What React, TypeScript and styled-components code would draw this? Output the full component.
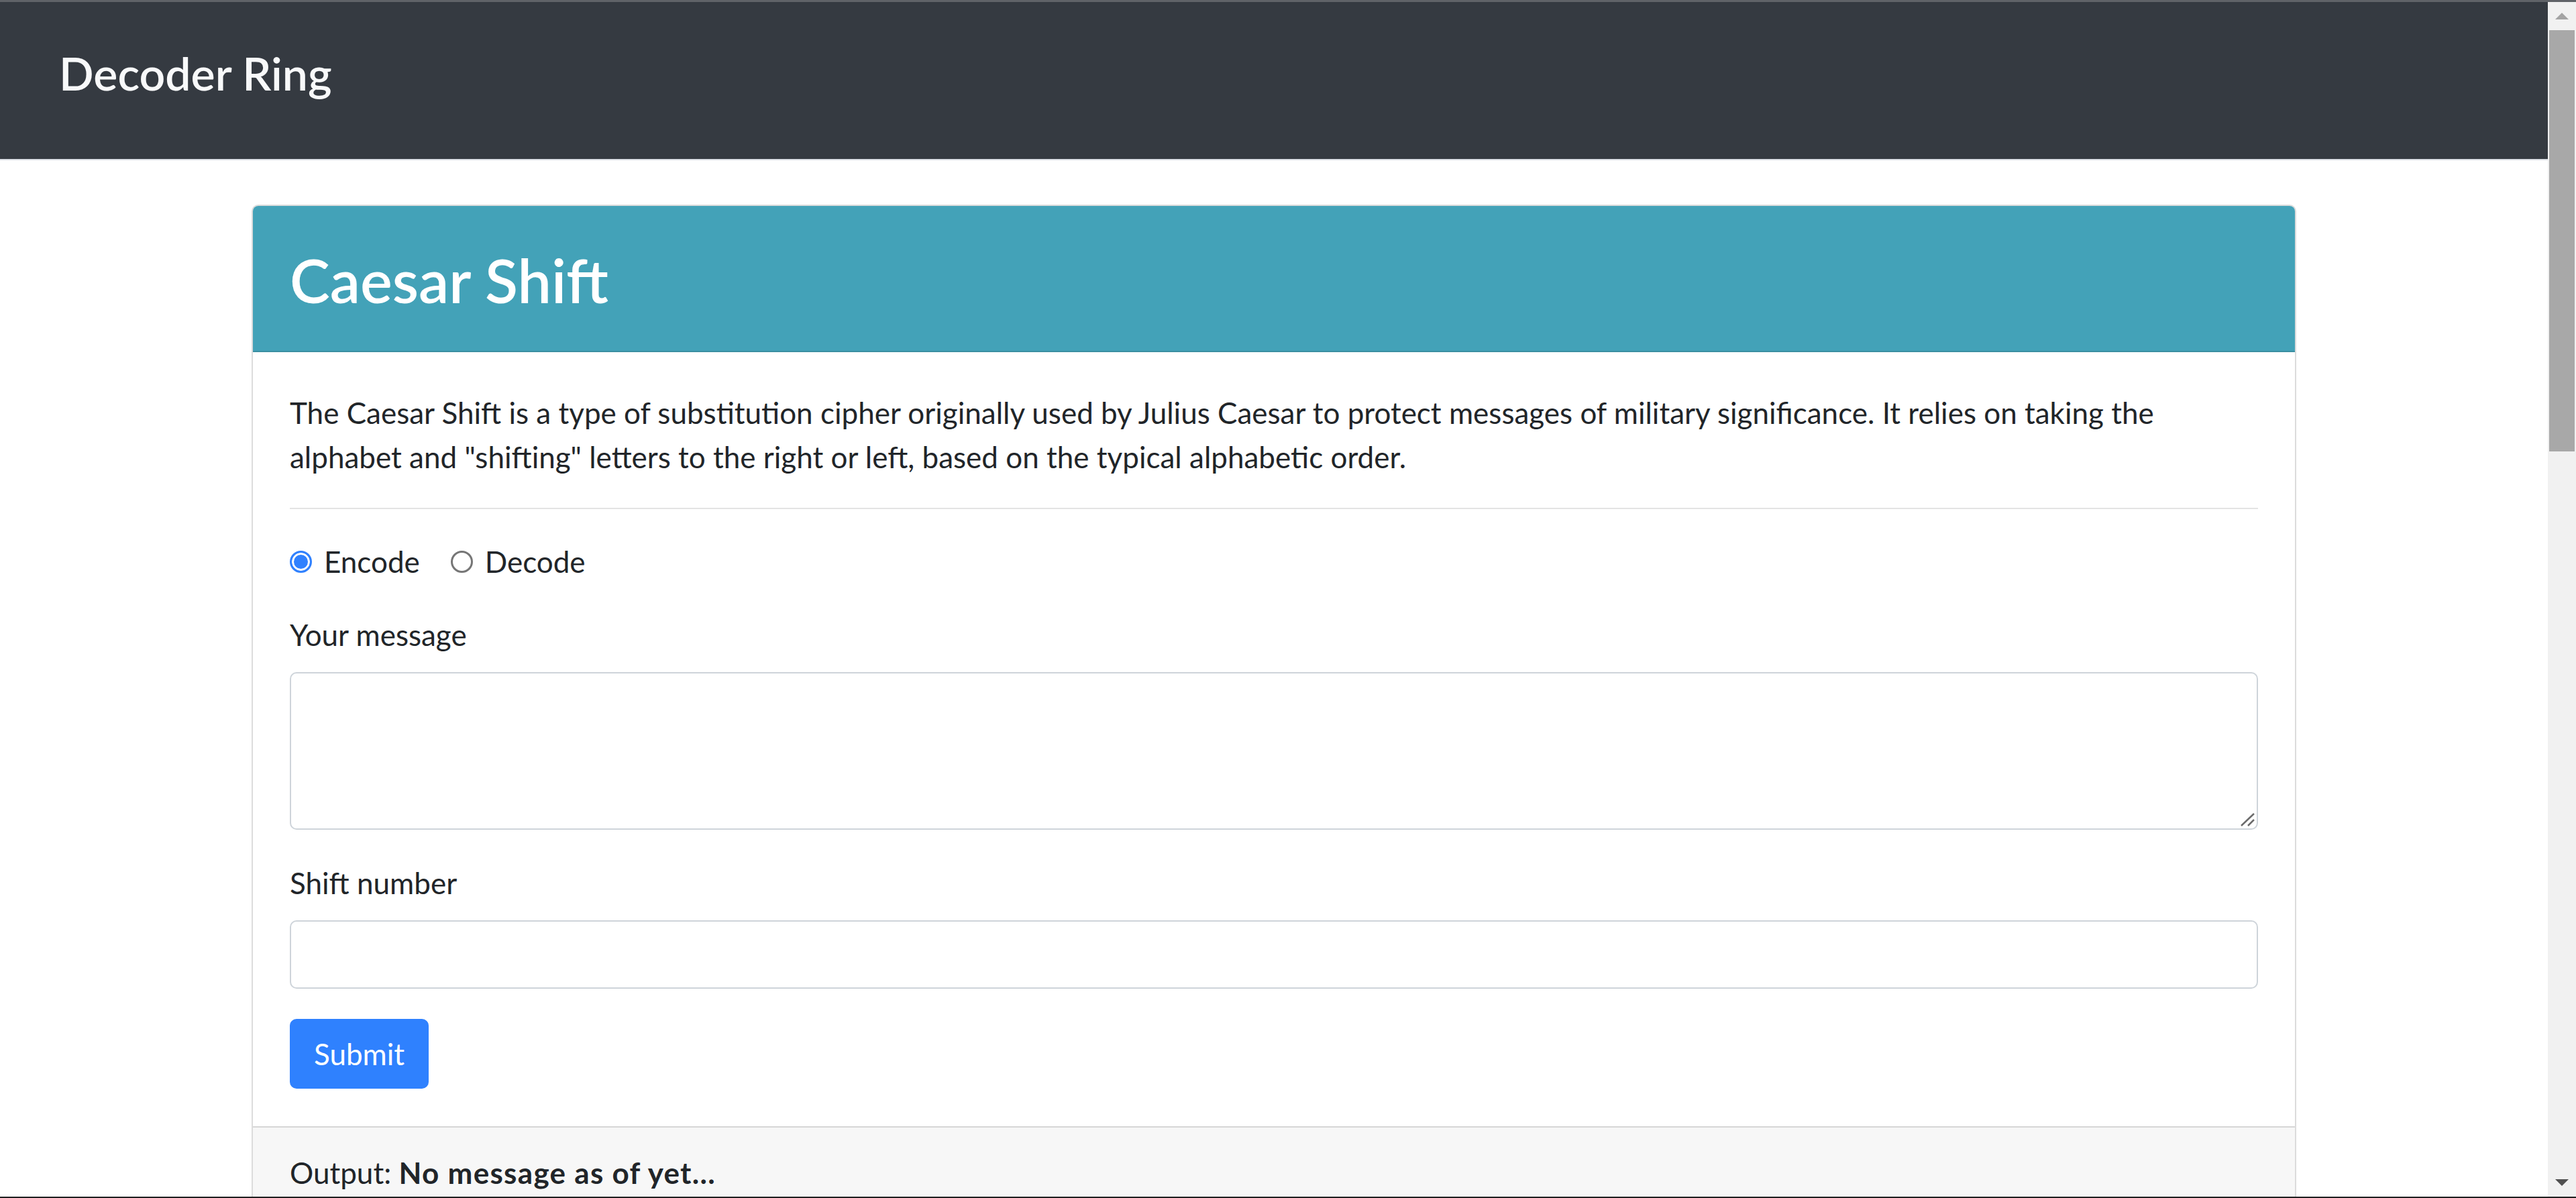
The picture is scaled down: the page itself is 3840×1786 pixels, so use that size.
import React from "react";
import styled, { createGlobalStyle } from "styled-components";

const GlobalStyle = createGlobalStyle`
  html, body {
    margin: 0;
    padding: 0;
    background: #ffffff;
    overflow: hidden;
  }
  body {
    font-family: Lato, "Open Sans", "Liberation Sans", sans-serif;
    color: #212529;
  }
  *, *::before, *::after {
    box-sizing: border-box;
  }
`;

const Viewport = styled.div`
  width: 3840px;
  height: 1786px;
  display: flex;
  flex-direction: column;
  overflow: hidden;
  background: #ffffff;
`;

const WindowEdge = styled.div<{ $h: number; $c: string }>`
  flex: none;
  height: ${(p) => p.$h}px;
  background: ${(p) => p.$c};
`;

const Frame = styled.div`
  flex: 1;
  min-height: 0;
  display: flex;
`;

const Main = styled.main`
  flex: 1;
  min-width: 0;
  overflow: hidden;
  display: flex;
  flex-direction: column;
`;

const Navbar = styled.nav`
  flex: none;
  height: 236px;
  background: #353a41;
  border-bottom: 2px solid #dde0e6;
  padding: 65px 88px 0;
`;

const Brand = styled.a`
  display: inline-block;
  font-size: 68px;
  line-height: 1.2;
  font-weight: 600;
  color: #f8f9fa;
  text-decoration: none;
`;

const Container = styled.div`
  width: 3048px;
  margin: 66px auto 0;
`;

const Card = styled.section`
  border: 2px solid #dcdcdc;
  border-radius: 10px;
  overflow: hidden;
  background: #ffffff;
`;

const CardHeader = styled.header`
  height: 218px;
  background: #43a2b8;
  border-bottom: 2px solid #3b8fa2;
  padding: 56px 55px 0;
`;

const Title = styled.h1`
  margin: 0;
  font-size: 90px;
  line-height: 1.2;
  font-weight: 600;
  color: #ffffff;
`;

const CardBody = styled.div`
  padding: 57px 55px 56px;
  font-size: 44px;
  line-height: 66px;
`;

const Lead = styled.p`
  margin: 0 0 43px;
`;

const Rule = styled.hr`
  margin: 0 0 45px;
  border: 0;
  border-top: 2px solid #e3e3e3;
`;

const RadioRow = styled.div`
  display: flex;
  align-items: center;
  height: 66px;
  gap: 46px;
  margin-bottom: 43px;
`;

const RadioLabel = styled.label`
  display: flex;
  align-items: center;
  gap: 18px;
`;

const Radio = styled.input`
  appearance: none;
  margin: 0;
  width: 33px;
  height: 33px;
  border-radius: 50%;
  border: 3px solid #767676;
  background: #ffffff;

  &:checked {
    border-color: #3081fe;
    background: #3081fe;
    box-shadow: inset 0 0 0 3px #ffffff;
  }
`;

const Field = styled.div<{ $gap: number }>`
  margin-bottom: ${(p) => p.$gap}px;
`;

const FieldLabel = styled.label`
  display: block;
  margin-bottom: 23px;
`;

const TextAreaWrap = styled.div`
  position: relative;
  height: 235px;
`;

const TextArea = styled.textarea`
  display: block;
  width: 100%;
  height: 100%;
  border: 2px solid #ced4da;
  border-radius: 10px;
  resize: none;
  font: inherit;
`;

const Grip = styled.svg`
  position: absolute;
  right: 4px;
  bottom: 4px;
  width: 22px;
  height: 22px;
`;

const TextInput = styled.input`
  display: block;
  width: 100%;
  height: 102px;
  border: 2px solid #ced4da;
  border-radius: 10px;
  font: inherit;
`;

const Button = styled.button`
  display: block;
  height: 104px;
  padding: 0 36px;
  border: 0;
  border-radius: 10px;
  background: #2f81fe;
  color: #ffffff;
  font-family: inherit;
  font-size: 44px;
  line-height: 66px;
`;

const CardFooter = styled.footer`
  background: #f7f7f7;
  border-top: 2px solid #d6d6d6;
  padding: 34px 55px 30px;
  font-size: 44px;
  line-height: 66px;
`;

const Strong = styled.strong`
  font-weight: 700;
  letter-spacing: 1.3px;
`;

const Scrollbar = styled.div`
  flex: none;
  width: 42px;
  background: #f1f1f1;
  display: flex;
  flex-direction: column;
`;

const ArrowButton = styled.div`
  flex: none;
  height: 42px;
  display: flex;
  align-items: center;
  justify-content: center;
`;

const Thumb = styled.div`
  flex: none;
  height: 628px;
  margin: 0 2px;
  background: #a8a8a8;
`;

const Spacer = styled.div`
  flex: 1;
`;

export default function App() {
  return (
    <>
      <GlobalStyle />
      <Viewport>
        <WindowEdge $h={3} $c="#606368" />
        <Frame>
          <Main>
            <Navbar>
              <Brand href="#">Decoder Ring</Brand>
            </Navbar>
            <Container>
              <Card>
                <CardHeader>
                  <Title>Caesar Shift</Title>
                </CardHeader>
                <CardBody>
                  <Lead>
                    The Caesar Shift is a type of substitution cipher originally used by Julius Caesar to
                    protect messages of military significance. It relies on taking the alphabet and
                    "shifting" letters to the right or left, based on the typical alphabetic order.
                  </Lead>
                  <Rule />
                  <RadioRow>
                    <RadioLabel>
                      <Radio type="radio" name="mode" defaultChecked />
                      Encode
                    </RadioLabel>
                    <RadioLabel>
                      <Radio type="radio" name="mode" />
                      Decode
                    </RadioLabel>
                  </RadioRow>
                  <Field $gap={46}>
                    <FieldLabel>Your message</FieldLabel>
                    <TextAreaWrap>
                      <TextArea />
                      <Grip viewBox="0 0 22 22">
                        <path d="M1 20 L20 2 M11 20 L20 11" stroke="#6b6b6b" strokeWidth="2.5" />
                      </Grip>
                    </TextAreaWrap>
                  </Field>
                  <Field $gap={45}>
                    <FieldLabel>Shift number</FieldLabel>
                    <TextInput type="text" />
                  </Field>
                  <Button type="button">Submit</Button>
                </CardBody>
                <CardFooter>
                  Output: <Strong>No message as of yet...</Strong>
                </CardFooter>
              </Card>
            </Container>
          </Main>
          <Scrollbar>
            <ArrowButton>
              <svg width="20" height="10" viewBox="0 0 20 10">
                <path d="M0 10 L10 0 L20 10 Z" fill="#a3a3a3" />
              </svg>
            </ArrowButton>
            <Thumb />
            <Spacer />
            <ArrowButton>
              <svg width="20" height="10" viewBox="0 0 20 10">
                <path d="M0 0 L20 0 L10 10 Z" fill="#505050" />
              </svg>
            </ArrowButton>
          </Scrollbar>
        </Frame>
        <WindowEdge $h={2} $c="#202020" />
      </Viewport>
    </>
  );
}
